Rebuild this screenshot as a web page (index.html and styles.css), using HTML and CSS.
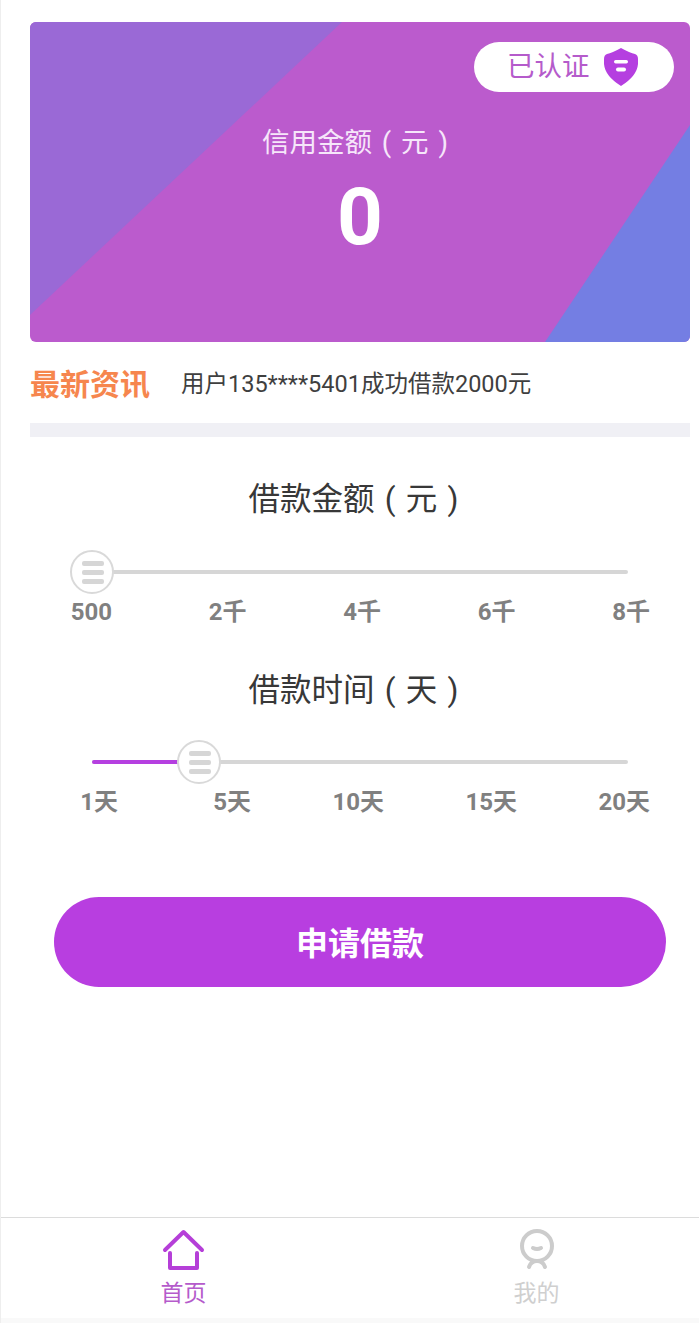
FILE: index.html
```html
<!DOCTYPE html>
<html lang="zh">
<head>
<meta charset="utf-8">
<title>首页</title>
<link rel="stylesheet" href="styles.css">
</head>
<body>
<div class="app">
  <main class="main">
    <section class="card">
      <div class="badge">
        <span class="badge-text">已认证</span>
        <svg class="shield" viewBox="0 0 34 38" width="34" height="38">
          <path class="shield-body" d="M17 0 Q26 5 31 6 Q34 7 34 11 L34 16 Q33 28 17 38 Q1 28 0 16 L0 11 Q0 7 3 6 Q8 5 17 0 Z"/>
          <rect class="shield-bar" x="10" y="12" width="14" height="3.5" rx="1.7"/>
          <rect class="shield-bar" x="12" y="19.5" width="10" height="4" rx="2"/>
        </svg>
      </div>
      <div class="card-title">信用金额 ( 元 )</div>
      <div class="card-amount">0</div>
    </section>

    <section class="news">
      <span class="news-head">最新资讯</span>
      <span class="news-text">用户135****5401成功借款2000元</span>
    </section>
    <div class="divider"></div>

    <section class="group group-amount">
      <h2 class="group-title">借款金额 ( 元 )</h2>
      <div class="slider">
        <div class="thumb thumb-a"><i></i><i></i><i></i></div>
      </div>
      <div class="scale scale-amount">
        <span>500</span><span>2千</span><span>4千</span><span>6千</span><span>8千</span>
      </div>
    </section>

    <section class="group group-time">
      <h2 class="group-title">借款时间 ( 天 )</h2>
      <div class="slider">
        <div class="fill"></div>
        <div class="thumb thumb-b"><i></i><i></i><i></i></div>
      </div>
      <div class="scale scale-time">
        <span>1天</span><span>5天</span><span>10天</span><span>15天</span><span>20天</span>
      </div>
    </section>

    <button class="apply" type="button">申请借款</button>
  </main>

  <nav class="tabbar">
    <div class="tab tab-home">
      <svg class="tab-icon" viewBox="0 0 44 44" width="44" height="44">
        <path class="home-stroke" d="M3 22 L21.5 4 L40 22"/>
        <path class="home-stroke" d="M8 25 L8 40 L35 40 L35 25"/>
      </svg>
      <span>首页</span>
    </div>
    <div class="tab tab-me">
      <svg class="tab-icon" viewBox="0 0 44 44" width="44" height="44">
        <circle class="me-stroke" cx="22" cy="18" r="15"/>
        <path class="me-stroke" d="M18 20 Q22 22 26 20"/>
        <path class="me-stroke" d="M14 39 Q16 33 22 33 Q28 33 30 39"/>
      </svg>
      <span>我的</span>
    </div>
  </nav>
</div>
</body>
</html>
```
FILE: styles.css
```css
* { box-sizing: border-box; }
html, body { margin: 0; padding: 0; background: #fff; }
body { font-family: Roboto, "Noto Sans CJK SC", sans-serif; }
.app {
  width: 699px;
  height: 1323px;
  display: flex;
  flex-direction: column;
  border-left: 1px solid #eeeeee;
  overflow: hidden;
}
.main { flex: 1; padding: 22px 9px 0 29px; }

.card {
  position: relative;
  height: 320px;
  border-radius: 6px;
  background: #bb5bcd;
  overflow: hidden;
  text-align: center;
  color: #fff;
}
.card::before {
  content: "";
  position: absolute;
  inset: 0;
  background: #9a69d6;
  clip-path: polygon(0 0, 312px 0, 0 293px);
}
.card::after {
  content: "";
  position: absolute;
  inset: 0;
  background: #747ee3;
  clip-path: polygon(660px 103px, 660px 320px, 515px 320px);
}
.badge {
  position: absolute;
  z-index: 1;
  top: 20px;
  right: 16px;
  width: 200px;
  height: 50px;
  border-radius: 25px;
  background: #fff;
  display: flex;
  align-items: center;
  padding-left: 33px;
  gap: 14px;
}
.badge-text { font-size: 27.5px; line-height: 50px; color: #b55bcb; }
.shield-body { fill: #b53fe0; }
.shield-bar { fill: #fff; }
.card-title {
  position: relative;
  z-index: 1;
  padding: 101px 10px 0 0;
  font-size: 27.5px;
  line-height: 40px;
  word-spacing: 3px;
  color: #f6e6fa;
}
.card-amount {
  position: relative;
  z-index: 1;
  font-size: 80px;
  font-weight: 700;
  line-height: 96px;
  margin-top: 6px;
}

.news { display: flex; align-items: center; height: 79px; padding-top: 1px; margin-bottom: 2px; }
.news-head { font-size: 30px; font-weight: 700; color: #f6864e; width: 151px; white-space: nowrap; }
.news-text { font-size: 23.5px; color: #3f3f3f; white-space: nowrap; }
.divider { height: 14px; background: #f0f0f5; }

.group { text-align: center; }
.group-amount { padding-top: 40px; }
.group-time { padding-top: 40px; }
.group-title { margin: 0; padding-right: 13px; font-size: 31.5px; font-weight: 400; line-height: 46px; word-spacing: 2.5px; color: #383838; }
.slider {
  position: relative;
  height: 4px;
  margin: 0 62px 0 62px;
  background: #d6d6d6;
  border-radius: 2px;
}
.group-amount .slider { margin-top: 47px; }
.group-time .slider { margin-top: 46px; }
.fill { position: absolute; left: 0; top: 0; bottom: 0; width: 107px; background: #b53fe0; border-radius: 2px; }
.thumb {
  position: absolute;
  top: -20px;
  width: 44px;
  height: 44px;
  padding-left: 2px;
  border-radius: 50%;
  border: 2px solid #d9d9d9;
  background: #fff;
  display: flex;
  flex-direction: column;
  align-items: center;
  justify-content: center;
  gap: 4px;
}
.thumb-a { left: -22px; }
.thumb-b { left: 85px; }
.thumb i { display: block; width: 22px; height: 5px; border-radius: 2px; background: #d6d6d6; }

.scale {
  display: grid;
  justify-content: end;
  text-align: right;
  margin-top: 22px;
  margin-right: 40px;
  font-size: 24px;
  font-weight: 700;
  line-height: 32px;
  color: #808080;
}
.scale-amount { grid-template-columns: auto repeat(4, 134.5px); }
.scale-time { grid-template-columns: auto repeat(4, 133px); }

.apply {
  display: block;
  width: 612px;
  height: 90px;
  margin: 79px 0 0 24px;
  padding: 0 0 2px;
  border: 0;
  border-radius: 45px;
  background: #b83ee0;
  color: #fff;
  font-family: inherit;
  font-size: 32px;
  font-weight: 700;
}

.tabbar {
  display: flex;
  height: 106px;
  border-top: 1px solid #dcdcdc;
  border-bottom: 5px solid #f9f9f9;
}
.tab {
  width: 50%;
  display: flex;
  flex-direction: column;
  align-items: center;
  padding-top: 10px;
  font-size: 23px;
  line-height: 30px;
}
.tab-icon { display: block; margin-bottom: 7px; }
.tab-home { color: #b55bcb; padding-left: 16px; }
.tab-me { color: #cfcfcf; padding-left: 24px; }
.home-stroke { fill: none; stroke: #b53fd8; stroke-width: 4; stroke-linecap: round; stroke-linejoin: round; }
.me-stroke { fill: none; stroke: #cccccc; stroke-width: 4; stroke-linecap: round; }
```
